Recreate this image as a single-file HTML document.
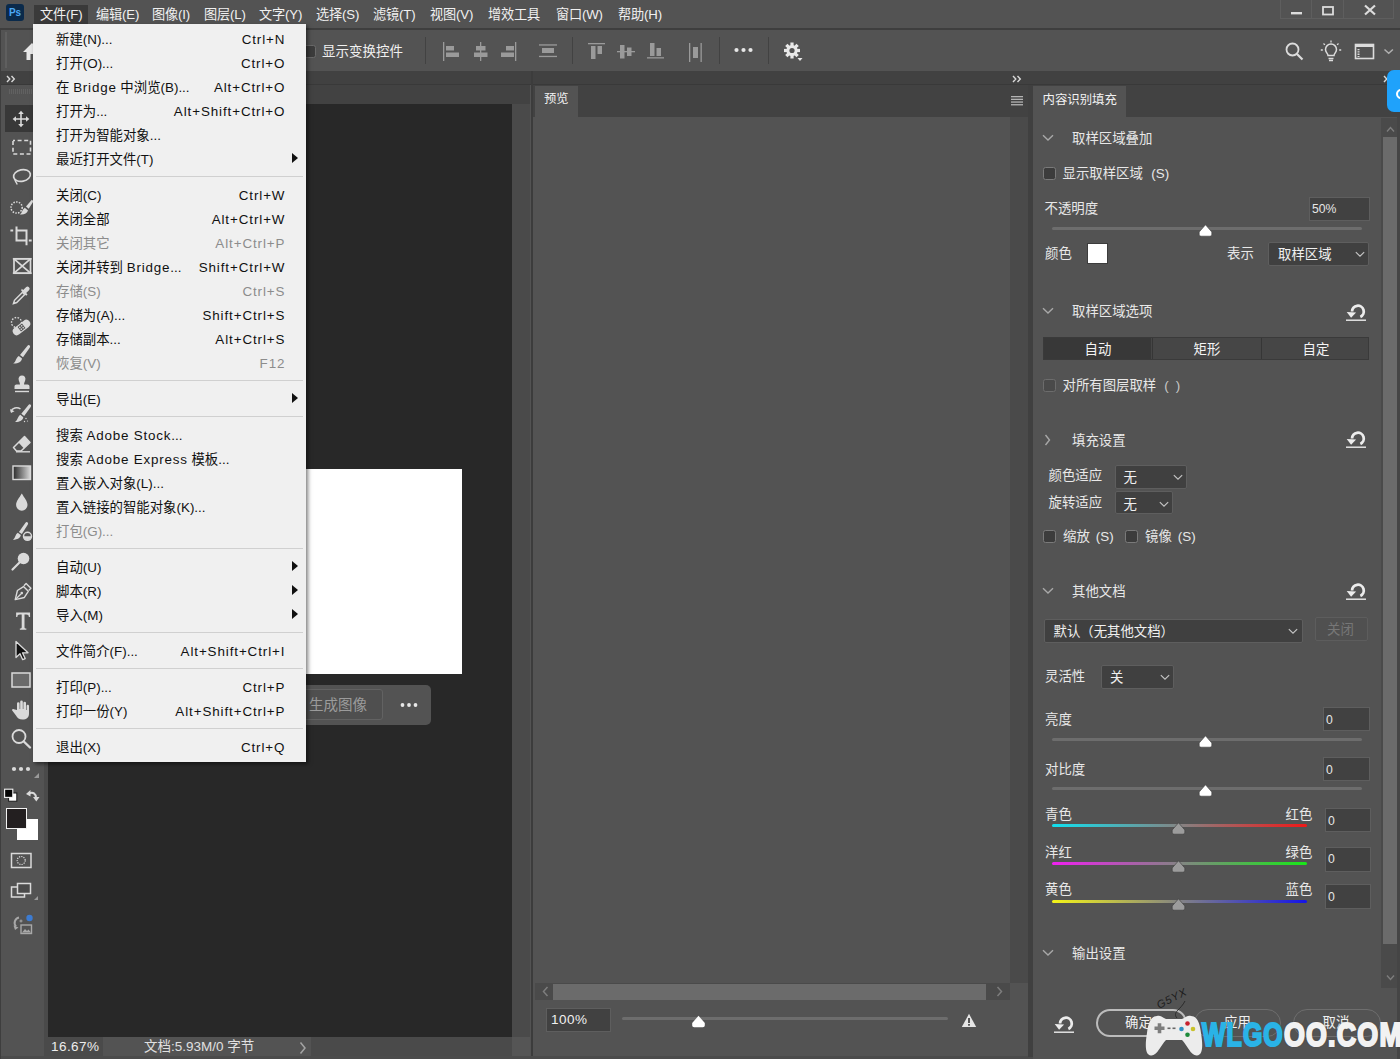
<!DOCTYPE html>
<html lang="zh-CN">
<head>
<meta charset="utf-8">
<title>Photoshop</title>
<style>
*{box-sizing:border-box;margin:0;padding:0}
html,body{width:1400px;height:1059px;overflow:hidden;background:#535353}
body{position:relative;font-family:"Liberation Sans","Noto Sans CJK SC",sans-serif;font-size:13.4px;color:#e6e6e6;-webkit-font-smoothing:antialiased}
.abs{position:absolute}
/* menubar */
#menubar{position:absolute;left:0;top:0;width:1400px;height:28px;background:#535353}
#menubar .mi{position:absolute;top:5px;height:20px;line-height:20px;font-size:13.2px;letter-spacing:-.15px;color:#f0f0f0;white-space:nowrap}
#mb-line{position:absolute;left:0;top:28px;width:1400px;height:2px;background:#3e3e3e}
/* options bar */
#optbar{position:absolute;left:0;top:30px;width:1400px;height:40px;background:#535353}
.vsep{position:absolute;width:1px;background:#424242}
/* strip */
#strip{position:absolute;left:0;top:70.5px;width:1400px;height:14.5px;background:#414141;border-bottom:1.5px solid #393939}
/* toolbar */
#toolbar{position:absolute;left:0;top:85px;width:46px;height:974px;background:#535353}
/* doc */
#doc{position:absolute;left:48px;top:85px;width:482px;height:972px;background:#282828}
#doctabs{position:absolute;left:0;top:0;width:100%;height:19px;background:#424242}
#docscroll{position:absolute;left:464px;top:19px;width:18px;height:933px;background:#4a4a4a}
#status{position:absolute;left:0;top:952px;width:100%;height:20px;background:#555}
/* preview */
#preview{position:absolute;left:533px;top:85px;width:495px;height:971px;background:#535353}
#prevtabs{position:absolute;left:0;top:0;width:100%;height:31.5px;background:#424242}
/* right panel */
#rp{position:absolute;left:1033px;top:85px;width:367px;height:974px;background:#535353}
#rptabs{position:absolute;left:0;top:0;width:100%;height:31.5px;background:#424242}
/* dropdown */
#menu{position:absolute;left:33px;top:24px;width:273px;height:738px;background:#f0f0f0;box-shadow:2px 2px 4px rgba(0,0,0,.5);color:#111;font-size:13.4px}

#menu{padding-top:3px}
#menu .it{position:relative;height:24px;line-height:24px;white-space:nowrap}
#menu .it .t{position:absolute;left:23px;top:1px}
#menu .it .t b{font-weight:normal;letter-spacing:.8px}
#menu .it .sc{position:absolute;right:21px;top:1px;letter-spacing:.9px;margin-right:-.4px}
#menu .it.dis{color:#8c8c8c}
#menu .ar{position:absolute;left:259px;top:5.5px;width:0;height:0;border-left:6px solid #111;border-top:5px solid transparent;border-bottom:5px solid transparent}
#menu .sep{height:12px;position:relative}
#menu .sep:after{content:"";position:absolute;left:3px;right:3px;top:5px;height:1px;background:#d0d0d0}

#pslogo{position:absolute;left:6px;top:4px;width:18px;height:17px;border-radius:3px;background:#0a2a4b;color:#4aa8f5;font-size:10px;font-weight:bold;line-height:17px;text-align:center;letter-spacing:0}
#mhl{position:absolute;left:34px;top:5px;width:54px;height:19px;background:#3a3a3a}
#winctl{position:absolute;left:1280px;top:-1px;width:114px;height:20px;border:1px solid #5e5e5e}
#winctl i{position:absolute;top:0;width:1px;height:19px;background:#5e5e5e}

.cb{width:13px;height:13px;border:1px solid #7a7a7a;border-radius:2.500px;background:#3c3c3c}

#rpc{position:absolute;left:0;top:0;width:0;height:0}
.tx{line-height:20px;white-space:nowrap;margin-top:.6px}
.fld{background:#414141;border:1px solid #5e5e5e}
.sel{background:#404040;border:1px solid #5e5e5e;border-radius:2px}

#blueic{position:absolute;left:1386.500px;top:69.500px;width:20px;height:42.500px;border-radius:7px;background:#1fa2fb;overflow:hidden}
#blueic i{position:absolute;left:9.500px;top:19px;width:10px;height:10px;border-radius:50%;border:2.500px solid #fff}
#wm .wt{position:absolute;left:1202.500px;top:1014.500px;height:40px;line-height:40px;font-family:"Liberation Sans",sans-serif;font-weight:bold;font-size:33px;white-space:nowrap;transform-origin:0 50%;letter-spacing:0}
#wm .b{color:#2ab3e6;-webkit-text-stroke:2.200px #2ab3e6;text-shadow:0 0 1.500px #205a78}
#wm .w{color:#f2f2f2;-webkit-text-stroke:2.200px #f2f2f2;text-shadow:0 0 2px #2e2e2e,0 0 2px #2e2e2e}
</style>
</head>
<body>
<div id="menubar">
<div id="pslogo"><span>Ps</span></div>
<div id="mhl"></div>
<div class="mi" style="left:40px">文件(F)</div>
<div class="mi" style="left:96px">编辑(E)</div>
<div class="mi" style="left:152px">图像(I)</div>
<div class="mi" style="left:204px">图层(L)</div>
<div class="mi" style="left:259px">文字(Y)</div>
<div class="mi" style="left:316px">选择(S)</div>
<div class="mi" style="left:373px">滤镜(T)</div>
<div class="mi" style="left:430px">视图(V)</div>
<div class="mi" style="left:488px">增效工具</div>
<div class="mi" style="left:556px">窗口(W)</div>
<div class="mi" style="left:618px">帮助(H)</div>
<div id="winctl"><i style="left:30px"></i><i style="left:62px"></i>
<svg class="abs" style="left:0;top:0" width="114" height="19" viewBox="0 0 114 19"><rect x="10" y="12" width="11" height="2.4" fill="#dcdcdc"/><rect x="42" y="7" width="10" height="7.5" fill="none" stroke="#dcdcdc" stroke-width="1.8"/><path d="M84 5.5l10 9M94 5.5l-10 9" stroke="#dcdcdc" stroke-width="2.2" fill="none"/></svg></div>
</div>
<div id="mb-line"></div>
<div id="optbar">
<div class="abs" style="left:5px;top:2px;width:2px;height:36px;background:#5f5f5f"></div>
<svg class="abs" style="left:21.5px;top:11.5px" width="20" height="20" viewBox="0 0 20 20"><path d="M10 1L1 10h3.500v8h4v-6h3v6h4v-8H19z" fill="#e8e8e8"/></svg>
<div class="cb abs" style="left:303px;top:14.500px;border-color:#6a6a6a"></div>
<div class="abs" style="left:322px;top:12px;line-height:20px;font-size:13.5px;color:#f0f0f0;white-space:nowrap">显示变换控件</div>
<div class="vsep" style="left:425px;top:7px;height:27px"></div>
<svg class="abs" style="left:440px;top:10px" width="270" height="24" viewBox="0 0 270 24" fill="#9a9a9a">
 <!-- align left -->
 <rect x="3" y="2" width="1.3" height="19"/><rect x="6" y="6" width="8" height="4.5"/><rect x="6" y="12.5" width="13" height="4.5"/>
 <!-- align center h -->
 <rect x="40" y="2" width="1.3" height="19"/><rect x="36" y="6" width="9.5" height="4.5"/><rect x="34" y="12.5" width="13.5" height="4.5"/>
 <!-- align right -->
 <rect x="75" y="2" width="1.3" height="19"/><rect x="66" y="6" width="8" height="4.5"/><rect x="61" y="12.5" width="13" height="4.5"/>
 <!-- distribute -->
 <rect x="99" y="4.300" width="18" height="1.300"/><rect x="102" y="8" width="12" height="5"/><rect x="99" y="15.800" width="18" height="1.300"/>
</svg>
<div class="vsep" style="left:572px;top:7px;height:27px"></div>
<svg class="abs" style="left:585px;top:10px" width="130" height="24" viewBox="0 0 130 24" fill="#9a9a9a">
 <!-- align top -->
 <rect x="3" y="3" width="17" height="1.3"/><rect x="6" y="6" width="4.5" height="13"/><rect x="12.5" y="6" width="4.5" height="8"/>
 <!-- align middle -->
 <rect x="32" y="11" width="18" height="1.3"/><rect x="35" y="5" width="4.5" height="13.5"/><rect x="42" y="7.5" width="4.5" height="8.5"/>
 <!-- align bottom -->
 <rect x="62" y="17.200" width="17" height="1.300"/><rect x="65" y="3" width="4.500" height="13"/><rect x="71.500" y="8" width="4.500" height="8"/>
 <!-- distribute v -->
 <rect x="104" y="3" width="1.3" height="19"/><rect x="108" y="7" width="5" height="11"/><rect x="115.5" y="3" width="1.3" height="19"/>
</svg>
<div class="vsep" style="left:719px;top:7px;height:27px"></div>
<svg class="abs" style="left:733px;top:16px" width="22" height="8" viewBox="0 0 22 8" fill="#e6e6e6"><circle cx="3.5" cy="4" r="2.1"/><circle cx="10.5" cy="4" r="2.1"/><circle cx="17.5" cy="4" r="2.1"/></svg>
<div class="vsep" style="left:768px;top:7px;height:27px"></div>
<svg class="abs" style="left:783px;top:11px" width="22" height="22" viewBox="0 0 22 22"><g transform="translate(9,9.5)" fill="#e8e8e8"><g id="gt"><rect x="-1.6" y="-8" width="3.2" height="16"/></g><rect x="-1.6" y="-8" width="3.2" height="16" transform="rotate(45)"/><rect x="-1.6" y="-8" width="3.2" height="16" transform="rotate(90)"/><rect x="-1.6" y="-8" width="3.2" height="16" transform="rotate(135)"/><circle r="5.6"/><circle r="2.6" fill="#535353"/></g><path d="M14.5 17h5l-2.5 3z" fill="#e8e8e8"/></svg>
<!-- right icons -->
<svg class="abs" style="left:1284px;top:11px" width="22" height="22" viewBox="0 0 22 22" fill="none" stroke="#dcdcdc"><circle cx="8.5" cy="8.5" r="6" stroke-width="1.8"/><path d="M13 13l5.5 5.5" stroke-width="2.2"/></svg>
<svg class="abs" style="left:1320px;top:10px" width="22" height="22" viewBox="0 0 22 22" fill="none" stroke="#dcdcdc" stroke-width="1.5"><path d="M8 15.5c0-2-2.5-3-2.5-6a5.5 5.5 0 0 1 11 0c0 3-2.500 4-2.500 6z"/><path d="M8.500 18.500h5M9 20.500h4" stroke-width="1.600"/><path d="M11 0.500v2M3.500 3.500l1.400 1.400M18.500 3.500l-1.400 1.400M0.800 10h2M19.200 10h2" stroke-width="1.300"/></svg>
<svg class="abs" style="left:1354px;top:13px" width="22" height="18" viewBox="0 0 22 18" fill="none" stroke="#dcdcdc"><rect x="1.500" y="1.500" width="18" height="14" stroke-width="1.600"/><path d="M1.500 3h18" stroke-width="2"/><path d="M4.500 6v8" stroke-width="2" stroke-dasharray="1.300 1"/></svg>
<svg class="abs" style="left:1383px;top:18px" width="12" height="7" viewBox="0 0 12 7" fill="none" stroke="#b0b0b0" stroke-width="1.500"><path d="M1.500 1.500l4.200 3.800 4.200-3.800"/></svg>
</div>
<div id="strip">
<svg class="abs" style="left:6px;top:4px" width="10" height="8" viewBox="0 0 10 8" fill="none" stroke="#d8d8d8" stroke-width="1.400"><path d="M1 1l2.800 3L1 7M5.500 1l2.800 3-2.800 3"/></svg>
<svg class="abs" style="left:1012px;top:4px" width="10" height="8" viewBox="0 0 10 8" fill="none" stroke="#d8d8d8" stroke-width="1.400"><path d="M1 1l2.800 3L1 7M5.500 1l2.800 3-2.800 3"/></svg>
<svg class="abs" style="left:1383px;top:4px" width="10" height="8" viewBox="0 0 10 8" fill="none" stroke="#d8d8d8" stroke-width="1.400"><path d="M1 1l2.800 3L1 7M5.500 1l2.800 3-2.800 3"/></svg>
</div>
<div id="toolbar"><div class="abs" style="left:44px;top:0;width:4px;height:100%;background:#4a4a4a"></div><div class="abs" style="left:9px;top:4px;width:26px;height:5px;background:repeating-linear-gradient(90deg,#616161 0 1px,transparent 1px 2px)"></div><div class="abs" style="left:5px;top:20px;width:34px;height:26.500px;background:#383838"></div><svg class="abs" style="left:9px;top:21px" width="24" height="24" viewBox="0 0 24 24"><g fill="#dadada" transform="translate(12 13) scale(.88) translate(-12 -12)"><path d="M12 2.500l3.200 3.800h-2.300v4.800h4.800v-2.300l3.800 3.200-3.800 3.200v-2.300h-4.800v4.800h2.300L12 21.500l-3.200-3.800h2.300v-4.800H6.300v2.300L2.500 12l3.800-3.200v2.300h4.800V6.300H8.800z"/></g></svg>
<svg class="abs" style="left:9px;top:50px" width="24" height="24" viewBox="0 0 24 24"><rect x="4" y="5.500" width="17.500" height="13.500" fill="none" stroke="#dadada" stroke-width="1.600" stroke-dasharray="4 2.600" stroke-dashoffset="2"/></svg>
<svg class="abs" style="left:9px;top:80px" width="24" height="24" viewBox="0 0 24 24"><g fill="none" stroke="#dadada" stroke-width="1.700"><ellipse cx="13" cy="10.500" rx="8.500" ry="5.800" transform="rotate(-12 13 10.500)"/><path d="M6.500 14.500c-1.500 1.500 1.500 3 1.500 5" stroke-width="1.500"/></g></svg>
<svg class="abs" style="left:9px;top:110px" width="24" height="24" viewBox="0 0 24 24"><g><circle cx="7.600" cy="12.500" r="5.600" fill="none" stroke="#dadada" stroke-width="1.500" stroke-dasharray="1.500 1.300"/><path d="M17 11.500l5.800-6.700 1.700 1.500-4.800 7.400z" fill="#dadada"/><path d="M10.800 19.200c2.400-.8 2-4.300 5-6.500l3.200 2.700c-1 3-4.800 4.600-8.200 3.800z" fill="#dadada"/></g></svg>
<svg class="abs" style="left:9px;top:139px" width="24" height="24" viewBox="0 0 24 24"><g fill="none" stroke="#dadada" stroke-width="2"><path d="M7.500 2.400V16.600H18.400M8.500 6.600H17.500V21.300M1.400 6.600H4.200M19.800 16.600H22.700"/></g></svg>
<svg class="abs" style="left:9px;top:169px" width="24" height="24" viewBox="0 0 24 24"><g fill="none" stroke="#dadada" stroke-width="1.700"><rect x="5" y="4.800" width="16.500" height="14.400"/><path d="M5 4.800l16.500 14.400M21.500 4.800l-16.500 14.400"/><path d="M3.800 4.800h19M3.800 19.200h19" stroke-width="1.300"/></g></svg>
<svg class="abs" style="left:9px;top:199px" width="24" height="24" viewBox="0 0 24 24"><g><path d="M4.500 19.500l1-3.200 8-8 2.200 2.200-8 8z" fill="none" stroke="#dadada" stroke-width="1.500"/><path d="M12.200 6.800l5 5 1.300-1.300-1.300-1.500 2.800-2.800a2.100 2.100 0 0 0-3-3l-2.800 2.800-1.500-1.300z" fill="#dadada"/></g></svg>
<svg class="abs" style="left:9px;top:229px" width="24" height="24" viewBox="0 0 24 24"><g><circle cx="7.500" cy="8.500" r="5" fill="none" stroke="#dadada" stroke-width="1.400" stroke-dasharray="1.600 1.400"/><g transform="rotate(-38 12.500 13.500)"><rect x="2.500" y="9.500" width="20" height="8" rx="4" fill="#dadada"/><rect x="9.700" y="10.700" width="5.600" height="5.600" fill="#535353"/><circle cx="11.300" cy="12.300" r=".8" fill="#dadada"/><circle cx="13.700" cy="12.300" r=".8" fill="#dadada"/><circle cx="11.300" cy="14.700" r=".8" fill="#dadada"/><circle cx="13.700" cy="14.700" r=".8" fill="#dadada"/></g></g></svg>
<svg class="abs" style="left:9px;top:258px" width="24" height="24" viewBox="0 0 24 24"><g fill="#dadada"><path d="M20.300 2.300c1 .6 1 1.500.4 2.400l-6.700 9.600-3-2.300 7.500-9.200c.5-.7 1.100-.9 1.800-.5z"/><path d="M9.800 13l3.200 2.500c-.2 3.300-4.300 5.300-8.800 5 2.800-1.500 2.600-5.700 5.600-7.500z"/></g></svg>
<svg class="abs" style="left:9px;top:288px" width="24" height="24" viewBox="0 0 24 24"><g fill="#dadada" transform="translate(1 0)"><path d="M12 2.500a3.400 3.400 0 0 1 3.300 4.400c-.4 1.500-1.300 3-1.300 4.600h3.500c1.200 0 2 .8 2 2v2.500H4.500v-2.500c0-1.200.8-2 2-2H10c0-1.600-.9-3.100-1.300-4.600A3.400 3.400 0 0 1 12 2.500z"/><rect x="5" y="17.800" width="14" height="1.400"/></g></svg>
<svg class="abs" style="left:9px;top:317px" width="24" height="24" viewBox="0 0 24 24"><g fill="#dadada"><path d="M21.300 2.500c1 .6 1 1.500.4 2.400l-6.500 9-2.900-2.200 7.200-8.700c.5-.7 1.100-.9 1.800-.5z"/><path d="M11.300 12.800l3 2.400c-.2 3-4 5-8.300 4.800 2.700-1.500 2.500-5.500 5.300-7.200z"/><path d="M2 9.500c1-3.500 6-5 9.500-2.500" fill="none" stroke="#dadada" stroke-width="1.500"/><path d="M1 7l1 4 3.500-1.800z"/><circle cx="17" cy="16.500" r=".7"/><circle cx="15.500" cy="19.500" r=".7"/><circle cx="18.500" cy="19" r=".6"/></g></svg>
<svg class="abs" style="left:9px;top:347px" width="24" height="24" viewBox="0 0 24 24"><g><path d="M4.500 15.500l3 3.500h4.500l9-8.500-5.500-6z" fill="none" stroke="#dadada" stroke-width="1.500" stroke-linejoin="round"/><path d="M9.500 10.500l6-6 5.500 6-6 6z" fill="#dadada"/><path d="M7 19.800h14" stroke="#dadada" stroke-width="1.400"/></g></svg>
<svg class="abs" style="left:9px;top:376px" width="24" height="24" viewBox="0 0 24 24"><defs><linearGradient id="gg" x1="0" x2="1"><stop offset="0" stop-color="#2a2a2a"/><stop offset="1" stop-color="#d8d8d8"/></linearGradient></defs><rect x="4" y="5" width="17.500" height="13.500" fill="url(#gg)" stroke="#dadada" stroke-width="1.400"/></svg>
<svg class="abs" style="left:9px;top:406px" width="24" height="24" viewBox="0 0 24 24"><path d="M12.800 2.500c2.600 4.500 5.700 7.500 5.700 11.500a5.700 5.700 0 0 1-11.400 0c0-4 3.100-7 5.700-11.500z" fill="#dadada"/></svg>
<svg class="abs" style="left:9px;top:436px" width="24" height="24" viewBox="0 0 24 24"><g fill="#dadada" transform="translate(.5 -1)"><path d="M17.800 2.300c1 .6 1 1.500.4 2.400l-5.900 9.300-2.900-2.100 6.600-9.100c.5-.7 1.100-.9 1.800-.5z"/><path d="M8.300 12.800l3 2.300c-.3 2.900-3.800 4.900-7.900 4.700 2.600-1.500 2.300-5.300 4.900-7z"/><circle cx="18" cy="16.300" r="4" fill="none" stroke="#dadada" stroke-width="1.500"/><path d="M14.200 16.300a3.800 3.800 0 0 0 7.600 0z"/></g></svg>
<svg class="abs" style="left:9px;top:465px" width="24" height="24" viewBox="0 0 24 24"><g><circle cx="14.500" cy="8.500" r="5.800" fill="#dadada"/><path d="M10.500 12.500l-7 7" stroke="#dadada" stroke-width="2.200" stroke-linecap="round"/></g></svg>
<svg class="abs" style="left:9px;top:495px" width="24" height="24" viewBox="0 0 24 24"><g fill="none" stroke="#dadada" stroke-width="1.600" stroke-linejoin="round" transform="translate(13.200 11.800) scale(.87) translate(-12 -12)"><path d="M4 21l2.500-10.500 7-4.500 5.500 5.500-4.500 7z"/><path d="M4 21l6.500-6.500"/><circle cx="11.500" cy="13.500" r="1.500" fill="#dadada" stroke="none"/><path d="M14 5l2.500-2.500 5.500 5.500-2.500 2.500" /></g></svg>
<svg class="abs" style="left:9px;top:524px" width="24" height="24" viewBox="0 0 24 24"><path transform="translate(14.100 12) scale(.93 1) translate(-12 -12)" d="M4.500 3.500h15v4.500h-1.300c-.2-1.800-.8-2.500-2.700-2.500h-2v12.500c0 1.200.5 1.500 2 1.500v1.300h-7v-1.300c1.500 0 2-.3 2-1.500V5.500h-2c-1.900 0-2.500.7-2.700 2.500H4.500z" fill="#dadada"/></svg>
<svg class="abs" style="left:9px;top:554px" width="24" height="24" viewBox="0 0 24 24"><path d="M7 2.500v16l4-3.800 2.700 6 2.500-1.100-2.700-5.800h5.500z" fill="#111" stroke="#dadada" stroke-width="1.300" stroke-linejoin="round"/></svg>
<svg class="abs" style="left:9px;top:583px" width="24" height="24" viewBox="0 0 24 24"><rect x="3" y="5" width="18" height="14" fill="#6a6a6a" stroke="#dadada" stroke-width="1.500"/></svg>
<svg class="abs" style="left:9px;top:613px" width="24" height="24" viewBox="0 0 24 24"><path d="M8 12V5.500a1.300 1.300 0 0 1 2.600 0V11h.6V3.800a1.300 1.300 0 0 1 2.600 0V11h.6V5a1.300 1.300 0 0 1 2.600 0v7h.6V8a1.200 1.200 0 0 1 2.400 0v7.500c0 4-2.500 6-6.500 6-3.500 0-5-1.500-6.500-4l-3.800-5c-.6-.9.600-2 1.600-1.200z" fill="#dadada"/></svg>
<svg class="abs" style="left:9px;top:642px" width="24" height="24" viewBox="0 0 24 24"><g fill="none" stroke="#dadada"><circle cx="10" cy="9.500" r="6.500" stroke-width="1.800"/><path d="M14.800 14.500l6.200 6" stroke-width="2.400" stroke-linecap="round"/></g></svg>
<svg class="abs" style="left:9px;top:672px" width="24" height="24" viewBox="0 0 24 24"><g fill="#dadada"><circle cx="5" cy="12" r="2.100"/><circle cx="12" cy="12" r="2.100"/><circle cx="19" cy="12" r="2.100"/></g></svg>
<svg class="abs" style="left:34px;top:688px" width="5" height="5" viewBox="0 0 5 5"><path d="M5 0v5H0z" fill="#9a9a9a"/></svg><svg class="abs" style="left:3px;top:703px" width="40" height="16" viewBox="0 0 40 16">
<rect x="5.600" y="5" width="8.200" height="8.200" fill="#fff" stroke="#1a1a1a" stroke-width="1"/><rect x="1.600" y="1.200" width="8.200" height="8.200" fill="#050505" stroke="#f4f4f4" stroke-width="1.100"/><path d="M26 5.500c4-2 7 0 7 4.500" fill="none" stroke="#dadada" stroke-width="2"/><path d="M23 6l4.500-4v6.500z" fill="#dadada"/><path d="M30 9h6.500l-3.200 4.500z" fill="#dadada"/></svg><div class="abs" style="left:17px;top:734px;width:21px;height:21px;background:#fff"></div><div class="abs" style="left:6px;top:723px;width:21px;height:21px;background:#231f20;border:1.500px solid #f2f2f2"></div><svg class="abs" style="left:10px;top:767px" width="24" height="18" viewBox="0 0 24 18"><rect x="1.500" y="1.500" width="19.500" height="14" fill="none" stroke="#dadada" stroke-width="1.500"/><circle cx="11.200" cy="8.500" r="4" fill="none" stroke="#dadada" stroke-width="1.200" stroke-dasharray="1.200 1.100"/></svg><svg class="abs" style="left:10px;top:797px" width="30" height="20" viewBox="0 0 30 20"><rect x="1.500" y="5" width="13" height="10" fill="#535353" stroke="#dadada" stroke-width="1.500"/><rect x="7.500" y="1.500" width="13" height="10" fill="#4a4a4a" stroke="#dadada" stroke-width="1.500"/><path d="M28 14v4h-4z" fill="#9a9a9a"/></svg><svg class="abs" style="left:12px;top:828px" width="24" height="24" viewBox="0 0 24 24"><path d="M7 4.500a5.500 5.500 0 0 0-3 9" fill="none" stroke="#a8a8a8" stroke-width="2"/><path d="M1.500 12.500l5 2-3.500 2.500z" fill="#a8a8a8"/><path d="M9 6.500v3M7.500 8h3" stroke="#a8a8a8" stroke-width="1"/><rect x="9" y="12" width="10.500" height="8.500" fill="none" stroke="#a8a8a8" stroke-width="1.400"/><path d="M10 19.500l3-3.500 2 2 1.500-1.500 2.500 3z" fill="#a8a8a8"/><circle cx="17.500" cy="5" r="3.200" fill="#3c7bd1"/></svg></div>
<div id="doc"><div id="doctabs"></div>
<div class="abs" style="left:200px;top:384px;width:214px;height:205px;background:#fff"></div>
<div class="abs" style="left:200px;top:600px;width:183px;height:40px;background:#535353;border-radius:5px"></div>
<div class="abs" style="left:200px;top:604px;width:135px;height:31px;background:#4f4f4f;border:1px solid #626262;border-radius:3px"></div>
<div class="abs" style="left:261px;top:609px;line-height:22px;font-size:14.500px;color:#9b9b9b;white-space:nowrap">生成图像</div>
<svg class="abs" style="left:351px;top:616px" width="20" height="8" viewBox="0 0 20 8" fill="#e8e8e8"><circle cx="3.500" cy="4" r="1.900"/><circle cx="10" cy="4" r="1.900"/><circle cx="16.500" cy="4" r="1.900"/></svg>
<div id="docscroll"></div>
<div id="status">
<div class="abs" style="left:0;top:0;width:55px;height:20px;background:#4a4a4a"></div>
<div class="abs" style="left:55px;top:0;width:208px;height:20px;background:#535353"></div><div class="abs" style="left:263px;top:0;width:201px;height:20px;background:#4a4a4a"></div>
<div class="abs" style="left:3px;top:0;line-height:20px;font-size:13.500px;letter-spacing:.45px;color:#ededed">16.67%</div>
<div class="abs" style="left:96px;top:0;line-height:19px;font-size:13.500px;color:#e0e0e0;white-space:nowrap">文档:5.93M/0 字节</div>
<svg class="abs" style="left:251px;top:4px" width="8" height="14" viewBox="0 0 8 14" fill="none" stroke="#a4a4a4" stroke-width="1.500"><path d="M1.500 1.500l4.500 5.500-4.500 5.500"/></svg>
</div></div>
<div class="abs" style="left:530.5px;top:71px;width:2.500px;height:986px;background:#3c3c3c"></div>
<div class="abs" style="left:0;top:1056px;width:1400px;height:3px;background:#4b4b4b"></div>
<div id="preview"><div id="prevtabs"></div>
<div class="abs" style="left:1.500px;top:0.500px;width:43px;height:32px;background:#535353"></div>
<div class="abs" style="left:11px;top:4px;line-height:20px;font-size:12.300px;color:#f2f2f2;white-space:nowrap">预览</div>
<svg class="abs" style="left:478px;top:11px" width="12" height="10" viewBox="0 0 12 10" fill="#b4b4b4"><rect y="0" width="12" height="1.300"/><rect y="2.700" width="12" height="1.300"/><rect y="5.400" width="12" height="1.300"/><rect y="8.100" width="12" height="1.300"/></svg>
<div class="abs" style="left:477px;top:32px;width:18px;height:866px;background:#4a4a4a"></div>
<div class="abs" style="left:2px;top:898px;width:475px;height:17px;background:#4a4a4a"></div>
<div class="abs" style="left:19.500px;top:899px;width:433px;height:15.500px;background:#6b6b6b"></div>
<svg class="abs" style="left:9px;top:901px" width="7" height="11" viewBox="0 0 7 11" fill="none" stroke="#7d7d7d" stroke-width="1.500"><path d="M5.500 1l-4 4.500 4 4.500"/></svg>
<svg class="abs" style="left:463px;top:901px" width="7" height="11" viewBox="0 0 7 11" fill="none" stroke="#7d7d7d" stroke-width="1.500"><path d="M1.500 1l4 4.500-4 4.500"/></svg>
<div class="abs" style="left:12.500px;top:922.500px;width:65px;height:24.500px;background:#414141;border:1px solid #5e5e5e"></div>
<div class="abs" style="left:18px;top:925px;line-height:20px;font-size:13.500px;letter-spacing:.5px;color:#f0f0f0">100%</div>
<div class="abs" style="left:89px;top:932.300px;width:326px;height:3px;background:#6d6d6d;border-radius:1.500px"></div>
<svg class="abs" style="left:158px;top:929.500px" width="15" height="13" viewBox="0 0 15 13"><path d="M7.500 .8L1.200 8v2.200c0 1.200.8 2 2 2h8.600c1.200 0 2-.8 2-2V8z" fill="#fff"/></svg>
<svg class="abs" style="left:428px;top:928px" width="16" height="15" viewBox="0 0 16 15"><path d="M8 .8L.8 14h14.400z" fill="#e6e6e6"/><rect x="7.100" y="5" width="1.800" height="5" fill="#444"/><rect x="7.100" y="11" width="1.800" height="1.700" fill="#444"/></svg>
</div>
<div class="abs" style="left:1028px;top:85px;width:4.500px;height:972px;background:#404040"></div>
<div id="rp"><div id="rptabs"></div></div>
<div id="rpc">
<div class="abs" style="left:1032.500px;top:85.500px;width:93px;height:32px;background:#535353"></div><div class="abs tx" style="left:1042.5px;top:89px;font-size:12.4px;color:#f2f2f2;">内容识别填充</div>
<div class="abs" style="left:1381px;top:118px;width:16px;height:870px;background:#4a4a4a"></div><div class="abs" style="left:1397px;top:117px;width:3px;height:942px;background:#454545"></div><div class="abs" style="left:1383px;top:136.500px;width:14px;height:807px;background:#6b6b6b"></div><svg class="abs" style="left:1385.500px;top:126.300px" width="9" height="7" viewBox="0 0 9 7" fill="none" stroke="#7d7d7d" stroke-width="1.400"><path d="M1 5.500l3.500-4 3.500 4"/></svg><svg class="abs" style="left:1385.500px;top:974px" width="9" height="7" viewBox="0 0 9 7" fill="none" stroke="#7d7d7d" stroke-width="1.400"><path d="M1 1.500l3.500 4 3.500-4"/></svg><svg class="abs" style="left:1042px;top:134px" width="12" height="8" viewBox="0 0 12 8" fill="none" stroke="#a8a8a8" stroke-width="1.400"><path d="M1 1.200l5 4.800 5-4.800"/></svg>
<div class="abs tx" style="left:1072px;top:128px;font-size:13.4px;color:#e8e8e8;">取样区域叠加</div>
<div class="cb abs" style="left:1043px;top:167px"></div>
<div class="abs tx" style="left:1062.5px;top:163.5px;font-size:13.4px;color:#e8e8e8;">显示取样区域<span style="margin-left:8.500px">(S)</span></div>
<div class="abs tx" style="left:1044.5px;top:198px;font-size:13.4px;color:#e8e8e8;">不透明度</div>
<div class="fld abs" style="left:1308.5px;top:197px;width:61px;height:24px"></div><div class="abs tx" style="left:1312px;top:198.5px;font-size:12.2px;color:#e6e6e6;">50%</div>
<div class="abs" style="left:1052px;top:227.2px;width:310px;height:3.3px;background:#6d6d6d;border-radius:1.5px"></div><svg class="abs" style="left:1198.0px;top:224.2px" width="15" height="13" viewBox="0 0 15 13"><path d="M7.500 .8L1.200 8v2.200c0 1.200.8 2 2 2h8.600c1.200 0 2-.8 2-2V8z" fill="#fff" stroke="#3a3a3a" stroke-width=".6"/></svg>
<div class="abs tx" style="left:1045px;top:243px;font-size:13.4px;color:#e8e8e8;">颜色</div>
<div class="abs" style="left:1087px;top:243px;width:21px;height:21px;background:#fff;border:1px solid #3c3c3c"></div><div class="abs tx" style="left:1227px;top:243px;font-size:13.4px;color:#e8e8e8;">表示</div>
<div class="sel abs" style="left:1267.5px;top:241.5px;width:101px;height:24.3px"></div><div class="abs tx" style="left:1278px;top:244.5px;font-size:13.4px;color:#f0f0f0;">取样区域</div>
<svg class="abs" style="left:1354.5px;top:251.0px" width="10" height="7" viewBox="0 0 12 8" fill="none" stroke="#c4c4c4" stroke-width="1.400"><path d="M1 1.200l5 4.800 5-4.800"/></svg>
<svg class="abs" style="left:1042px;top:307px" width="12" height="8" viewBox="0 0 12 8" fill="none" stroke="#a8a8a8" stroke-width="1.400"><path d="M1 1.200l5 4.800 5-4.800"/></svg>
<div class="abs tx" style="left:1072px;top:301px;font-size:13.4px;color:#e8e8e8;">取样区域选项</div>
<svg class="abs" style="left:1346px;top:304px" width="20" height="17" viewBox="0 0 20 17"><path d="M6.050 7.600A5.850 5.850 0 1 1 14.370 12.900" fill="none" stroke="#ececec" stroke-width="2.800"/><path d="M.7 8.100l9.400.4-5 5.200z" fill="#ececec"/><rect x="0" y="15.500" width="20" height="1.400" fill="#ececec"/></svg>
<div class="abs" style="left:1043px;top:337px;width:326px;height:23px;background:#464646;border:1px solid #3a3a3a"></div><div class="abs" style="left:1044px;top:338px;width:107px;height:21px;background:#383838"></div><div class="abs" style="left:1151.500px;top:338px;width:1.500px;height:21px;background:#363636"></div><div class="abs" style="left:1260.500px;top:338px;width:1.500px;height:21px;background:#363636"></div><div class="abs tx" style="left:1084.5px;top:339px;font-size:13.4px;color:#f4f4f4;">自动</div>
<div class="abs tx" style="left:1193.5px;top:339px;font-size:13.4px;color:#f4f4f4;">矩形</div>
<div class="abs tx" style="left:1302.5px;top:339px;font-size:13.4px;color:#f4f4f4;">自定</div>
<div class="cb abs" style="left:1043px;top:378.5px;background:#4a4a4a;border-color:#6c6c6c"></div>
<div class="abs tx" style="left:1062.5px;top:375px;font-size:13.4px;color:#e8e8e8;">对所有图层取样<span style="margin-left:8px;letter-spacing:7px;color:#c8c8c8">()</span></div>
<svg class="abs" style="left:1044px;top:434px" width="8" height="12" viewBox="0 0 8 12" fill="none" stroke="#a8a8a8" stroke-width="1.400"><path d="M1.500 1l4 5-4 5"/></svg>
<div class="abs tx" style="left:1072px;top:430px;font-size:13.4px;color:#e8e8e8;">填充设置</div>
<svg class="abs" style="left:1346px;top:431px" width="20" height="17" viewBox="0 0 20 17"><path d="M6.050 7.600A5.850 5.850 0 1 1 14.370 12.900" fill="none" stroke="#ececec" stroke-width="2.800"/><path d="M.7 8.100l9.400.4-5 5.200z" fill="#ececec"/><rect x="0" y="15.500" width="20" height="1.400" fill="#ececec"/></svg>
<div class="abs tx" style="left:1048.5px;top:465.5px;font-size:13.4px;color:#e8e8e8;">颜色适应</div>
<div class="sel abs" style="left:1114.5px;top:465px;width:72.5px;height:23.5px"></div><div class="abs tx" style="left:1123.5px;top:467.5px;font-size:13.4px;color:#f0f0f0;">无</div>
<svg class="abs" style="left:1172.5px;top:474.0px" width="10" height="7" viewBox="0 0 12 8" fill="none" stroke="#c4c4c4" stroke-width="1.400"><path d="M1 1.200l5 4.800 5-4.800"/></svg>
<div class="abs tx" style="left:1048.5px;top:492px;font-size:13.4px;color:#e8e8e8;">旋转适应</div>
<div class="sel abs" style="left:1114.5px;top:491.3px;width:58px;height:23.2px"></div><div class="abs tx" style="left:1123.5px;top:494.0px;font-size:13.4px;color:#f0f0f0;">无</div>
<svg class="abs" style="left:1158.5px;top:500.5px" width="10" height="7" viewBox="0 0 12 8" fill="none" stroke="#c4c4c4" stroke-width="1.400"><path d="M1 1.200l5 4.800 5-4.800"/></svg>
<div class="cb abs" style="left:1043px;top:530px"></div>
<div class="abs tx" style="left:1063px;top:526.5px;font-size:13.4px;color:#e8e8e8;">缩放<span style="margin-left:6px">(S)</span></div>
<div class="cb abs" style="left:1125px;top:530px"></div>
<div class="abs tx" style="left:1145px;top:526.5px;font-size:13.4px;color:#e8e8e8;">镜像<span style="margin-left:6px">(S)</span></div>
<svg class="abs" style="left:1042px;top:587px" width="12" height="8" viewBox="0 0 12 8" fill="none" stroke="#a8a8a8" stroke-width="1.400"><path d="M1 1.200l5 4.800 5-4.800"/></svg>
<div class="abs tx" style="left:1072px;top:581px;font-size:13.4px;color:#e8e8e8;">其他文档</div>
<svg class="abs" style="left:1346px;top:582.5px" width="20" height="17" viewBox="0 0 20 17"><path d="M6.050 7.600A5.850 5.850 0 1 1 14.370 12.900" fill="none" stroke="#ececec" stroke-width="2.800"/><path d="M.7 8.100l9.400.4-5 5.200z" fill="#ececec"/><rect x="0" y="15.500" width="20" height="1.400" fill="#ececec"/></svg>
<div class="sel abs" style="left:1044px;top:618.5px;width:258.5px;height:24.7px"></div><div class="abs tx" style="left:1053.5px;top:621.5px;font-size:13.4px;color:#f0f0f0;">默认（无其他文档）</div>
<svg class="abs" style="left:1288px;top:628.0px" width="10" height="7" viewBox="0 0 12 8" fill="none" stroke="#c4c4c4" stroke-width="1.400"><path d="M1 1.200l5 4.800 5-4.800"/></svg>
<div class="abs" style="left:1314.500px;top:617px;width:53.500px;height:24.300px;background:#505050;border:1px solid #5d5d5d;border-radius:2px"></div><div class="abs tx" style="left:1327px;top:619.5px;font-size:13.4px;color:#777;">关闭</div>
<div class="abs tx" style="left:1045px;top:666px;font-size:13.4px;color:#e8e8e8;">灵活性</div>
<div class="sel abs" style="left:1101px;top:664.5px;width:73.2px;height:24.5px"></div><div class="abs tx" style="left:1110px;top:667.0px;font-size:13.4px;color:#f0f0f0;">关</div>
<svg class="abs" style="left:1160px;top:673.5px" width="10" height="7" viewBox="0 0 12 8" fill="none" stroke="#c4c4c4" stroke-width="1.400"><path d="M1 1.200l5 4.800 5-4.800"/></svg>
<div class="abs tx" style="left:1045px;top:709.5px;font-size:13.4px;color:#e8e8e8;">亮度</div>
<div class="fld abs" style="left:1322.6px;top:707px;width:47.5px;height:24px"></div><div class="abs tx" style="left:1326px;top:709.0px;font-size:12.2px;color:#e6e6e6;">0</div>
<div class="abs" style="left:1052px;top:737.5px;width:310px;height:3.3px;background:#6d6d6d;border-radius:1.5px"></div><svg class="abs" style="left:1198.0px;top:734.7px" width="15" height="13" viewBox="0 0 15 13"><path d="M7.500 .8L1.200 8v2.200c0 1.200.8 2 2 2h8.600c1.200 0 2-.8 2-2V8z" fill="#fff" stroke="#3a3a3a" stroke-width=".6"/></svg>
<div class="abs tx" style="left:1045px;top:759.5px;font-size:13.4px;color:#e8e8e8;">对比度</div>
<div class="fld abs" style="left:1322.6px;top:757.3px;width:47.5px;height:24px"></div><div class="abs tx" style="left:1326px;top:759.5px;font-size:12.2px;color:#e6e6e6;">0</div>
<div class="abs" style="left:1052px;top:787.1px;width:310px;height:3.3px;background:#6d6d6d;border-radius:1.5px"></div><svg class="abs" style="left:1198.0px;top:784.2px" width="15" height="13" viewBox="0 0 15 13"><path d="M7.500 .8L1.200 8v2.200c0 1.200.8 2 2 2h8.600c1.200 0 2-.8 2-2V8z" fill="#fff" stroke="#3a3a3a" stroke-width=".6"/></svg>
<div class="abs tx" style="left:1045px;top:804px;font-size:13.4px;color:#e8e8e8;">青色</div>
<div class="abs tx" style="left:1285.5px;top:804px;font-size:13.4px;color:#e8e8e8;">红色</div>
<div class="fld abs" style="left:1325.2px;top:808.1px;width:45.4px;height:24.3px"></div><div class="abs tx" style="left:1328px;top:810.25px;font-size:12.2px;color:#e6e6e6;">0</div>
<div class="abs" style="left:1052px;top:823.6px;width:255px;height:3.6px;background:linear-gradient(90deg,#10e0f0,#7f8888 48%,#887f7f 52%,#f01818);border-radius:1.500px"></div><svg class="abs" style="left:1170.5px;top:822px" width="15" height="13" viewBox="0 0 15 13"><path d="M7.500 .8L1.200 8v2.200c0 1.200.8 2 2 2h8.600c1.200 0 2-.8 2-2V8z" fill="#9c9c9c" stroke="#3a3a3a" stroke-width=".6"/></svg>
<div class="abs tx" style="left:1045px;top:842px;font-size:13.4px;color:#e8e8e8;">洋红</div>
<div class="abs tx" style="left:1285.5px;top:842px;font-size:13.4px;color:#e8e8e8;">绿色</div>
<div class="fld abs" style="left:1325.2px;top:847px;width:45.4px;height:24.5px"></div><div class="abs tx" style="left:1328px;top:848.75px;font-size:12.2px;color:#e6e6e6;">0</div>
<div class="abs" style="left:1052px;top:861.8px;width:255px;height:3.6px;background:linear-gradient(90deg,#f020f0,#887f88 48%,#7f887f 52%,#18e818);border-radius:1.500px"></div><svg class="abs" style="left:1170.5px;top:860px" width="15" height="13" viewBox="0 0 15 13"><path d="M7.500 .8L1.200 8v2.200c0 1.200.8 2 2 2h8.600c1.200 0 2-.8 2-2V8z" fill="#9c9c9c" stroke="#3a3a3a" stroke-width=".6"/></svg>
<div class="abs tx" style="left:1045px;top:879.5px;font-size:13.4px;color:#e8e8e8;">黄色</div>
<div class="abs tx" style="left:1285.5px;top:879.5px;font-size:13.4px;color:#e8e8e8;">蓝色</div>
<div class="fld abs" style="left:1325.2px;top:884.3px;width:45.4px;height:24.5px"></div><div class="abs tx" style="left:1328px;top:886.25px;font-size:12.2px;color:#e6e6e6;">0</div>
<div class="abs" style="left:1052px;top:899.8px;width:255px;height:3.6px;background:linear-gradient(90deg,#f4f418,#88887f 48%,#7f7f88 52%,#1414e8);border-radius:1.500px"></div><svg class="abs" style="left:1170.5px;top:898px" width="15" height="13" viewBox="0 0 15 13"><path d="M7.500 .8L1.200 8v2.200c0 1.200.8 2 2 2h8.600c1.200 0 2-.8 2-2V8z" fill="#9c9c9c" stroke="#3a3a3a" stroke-width=".6"/></svg>
<svg class="abs" style="left:1042px;top:949px" width="12" height="8" viewBox="0 0 12 8" fill="none" stroke="#a8a8a8" stroke-width="1.400"><path d="M1 1.200l5 4.800 5-4.800"/></svg>
<div class="abs tx" style="left:1072px;top:943px;font-size:13.4px;color:#e8e8e8;">输出设置</div>
<svg class="abs" style="left:1054px;top:1015.5px" width="20" height="17" viewBox="0 0 20 17"><path d="M6.050 7.600A5.850 5.850 0 1 1 14.370 12.900" fill="none" stroke="#ececec" stroke-width="2.800"/><path d="M.7 8.100l9.400.4-5 5.200z" fill="#ececec"/><rect x="0" y="15.500" width="20" height="1.400" fill="#ececec"/></svg>
<div class="abs" style="left:1095.500px;top:1008.500px;width:91px;height:28px;border:2px solid #bcbcbc;border-radius:14px"></div><div class="abs tx" style="left:1125px;top:1012px;font-size:13.4px;color:#f0f0f0;">确定</div>
<div class="abs" style="left:1194px;top:1008.500px;width:87px;height:28px;border:1.500px solid #6e6e6e;border-radius:14px"></div><div class="abs tx" style="left:1224px;top:1012px;font-size:13.4px;color:#f0f0f0;">应用</div>
<div class="abs" style="left:1293px;top:1008.500px;width:87.500px;height:28px;border:1.500px solid #6e6e6e;border-radius:14px"></div><div class="abs tx" style="left:1322.5px;top:1012px;font-size:13.4px;color:#f0f0f0;">取消</div>
</div>

<div id="blueic"><i></i></div>
<div id="wm">
<svg class="abs" style="left:1144px;top:985px" width="62" height="74" viewBox="0 0 62 74">
<path d="M33 33c-3-3-1-6 1-8s5-5 7-9" fill="none" stroke="#2a2a2a" stroke-width="1"/>
<path d="M13 31C7 31 4 38 3 48 1 60 1 70 7 70.500c6 .5 10-10.500 15-15.500h16c5 5 9 16 15 15.500 6-.5 6-10.500 4-22.500-1-10-4-17-10-17-4-1-6 2-9 3H22c-3-1-5-4-9-3z" fill="#ececec"/>
<path d="M10.500 41.500h3.200v-3.200h3.600v3.200h3.200v3.600h-3.200v3.200h-3.600v-3.200h-3.200z" fill="#7d7d7d"/>
<rect x="23.500" y="42.500" width="3" height="1.600" fill="#666"/><rect x="28.500" y="42.500" width="3" height="1.600" fill="#666"/>
<circle cx="43.500" cy="38.500" r="2.300" fill="#c8202c"/><circle cx="37.500" cy="44" r="2.300" fill="#2f8fc0"/><circle cx="49" cy="44" r="2.300" fill="#c9c22b"/><circle cx="43.500" cy="49.800" r="2.300" fill="#1d8a3a"/>
<text x="15" y="24" font-family="'Liberation Sans',sans-serif" font-size="11" font-style="italic" fill="#1c1c1c" transform="rotate(-27 15 24)" letter-spacing=".8">G5YX</text>
</svg>
<div class="wt b" style="left:1201.500px;transform:scaleX(.753);letter-spacing:1.500px">WLGO</div><div class="wt w" style="left:1283.500px;transform:scaleX(.812);letter-spacing:1.500px">OO.COM</div>
</div>
<div class="abs" style="left:0;top:29px;width:1.200px;height:1030px;background:#3e3e3e"></div>
<div id="menu">
<div class="it"><span class="t">新建(N)...</span><span class="sc">Ctrl+N</span></div>
<div class="it"><span class="t">打开(O)...</span><span class="sc">Ctrl+O</span></div>
<div class="it"><span class="t">在 <b>Bridge</b> 中浏览(B)...</span><span class="sc">Alt+Ctrl+O</span></div>
<div class="it"><span class="t">打开为...</span><span class="sc">Alt+Shift+Ctrl+O</span></div>
<div class="it"><span class="t">打开为智能对象...</span></div>
<div class="it"><span class="t">最近打开文件(T)</span><span class="ar"></span></div>
<div class="sep"></div>
<div class="it"><span class="t">关闭(C)</span><span class="sc">Ctrl+W</span></div>
<div class="it"><span class="t">关闭全部</span><span class="sc">Alt+Ctrl+W</span></div>
<div class="it dis"><span class="t">关闭其它</span><span class="sc">Alt+Ctrl+P</span></div>
<div class="it"><span class="t">关闭并转到 <b>Bridge</b>...</span><span class="sc">Shift+Ctrl+W</span></div>
<div class="it dis"><span class="t">存储(S)</span><span class="sc">Ctrl+S</span></div>
<div class="it"><span class="t">存储为(A)...</span><span class="sc">Shift+Ctrl+S</span></div>
<div class="it"><span class="t">存储副本...</span><span class="sc">Alt+Ctrl+S</span></div>
<div class="it dis"><span class="t">恢复(V)</span><span class="sc">F12</span></div>
<div class="sep"></div>
<div class="it"><span class="t">导出(E)</span><span class="ar"></span></div>
<div class="sep"></div>
<div class="it"><span class="t">搜索 <b>Adobe Stock</b>...</span></div>
<div class="it"><span class="t">搜索 <b>Adobe Express</b> 模板...</span></div>
<div class="it"><span class="t">置入嵌入对象(L)...</span></div>
<div class="it"><span class="t">置入链接的智能对象(K)...</span></div>
<div class="it dis"><span class="t">打包(G)...</span></div>
<div class="sep"></div>
<div class="it"><span class="t">自动(U)</span><span class="ar"></span></div>
<div class="it"><span class="t">脚本(R)</span><span class="ar"></span></div>
<div class="it"><span class="t">导入(M)</span><span class="ar"></span></div>
<div class="sep"></div>
<div class="it"><span class="t">文件简介(F)...</span><span class="sc">Alt+Shift+Ctrl+I</span></div>
<div class="sep"></div>
<div class="it"><span class="t">打印(P)...</span><span class="sc">Ctrl+P</span></div>
<div class="it"><span class="t">打印一份(Y)</span><span class="sc">Alt+Shift+Ctrl+P</span></div>
<div class="sep"></div>
<div class="it"><span class="t">退出(X)</span><span class="sc">Ctrl+Q</span></div>
</div>
</body>
</html>
